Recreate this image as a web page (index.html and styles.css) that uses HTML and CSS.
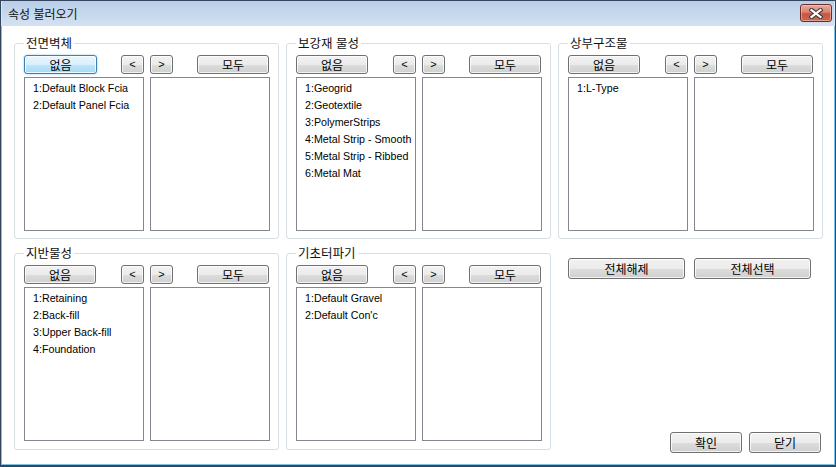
FILE: index.html
```html
<!DOCTYPE html>
<html lang="ko">
<head>
    <meta charset="UTF-8">
    <title>속성 불러오기</title>
    <link rel="stylesheet" href="styles.css">
</head>
<body>
<div class="window">
    <div class="titlebar">
        <span class="title">속성 불러오기</span>
        <button class="close-btn" aria-label="닫기">
            <svg width="14" height="11" viewBox="0 0 14 11">
                <path d="M2.5 2 L11.5 9 M11.5 2 L2.5 9" stroke="#3d3d3d" stroke-width="4.2" stroke-linecap="square" fill="none"/>
                <path d="M2.5 2 L11.5 9 M11.5 2 L2.5 9" stroke="#ffffff" stroke-width="2.2" stroke-linecap="square" fill="none"/>
            </svg>
        </button>
    </div>
    <div class="client">
        <fieldset class="group">
            <legend>전면벽체</legend>
            <div class="picker">
                <div class="bar"><button class="btn btn-side is-default">없음</button><button class="btn btn-arrow">&lt;</button></div>
                <div class="bar bar-right"><button class="btn btn-arrow">&gt;</button><button class="btn btn-side">모두</button></div>
                <ul class="list">
                    <li>1:Default Block Fcia</li>
                    <li>2:Default Panel Fcia</li>
                </ul>
                <ul class="list"></ul>
            </div>
        </fieldset>

        <fieldset class="group">
            <legend>보강재 물성</legend>
            <div class="picker">
                <div class="bar"><button class="btn btn-side">없음</button><button class="btn btn-arrow">&lt;</button></div>
                <div class="bar bar-right"><button class="btn btn-arrow">&gt;</button><button class="btn btn-side">모두</button></div>
                <ul class="list">
                    <li>1:Geogrid</li>
                    <li>2:Geotextile</li>
                    <li>3:PolymerStrips</li>
                    <li>4:Metal Strip - Smooth</li>
                    <li>5:Metal Strip - Ribbed</li>
                    <li>6:Metal Mat</li>
                </ul>
                <ul class="list"></ul>
            </div>
        </fieldset>

        <fieldset class="group">
            <legend>상부구조물</legend>
            <div class="picker">
                <div class="bar"><button class="btn btn-side">없음</button><button class="btn btn-arrow">&lt;</button></div>
                <div class="bar bar-right"><button class="btn btn-arrow">&gt;</button><button class="btn btn-side">모두</button></div>
                <ul class="list">
                    <li>1:L-Type</li>
                </ul>
                <ul class="list"></ul>
            </div>
        </fieldset>

        <fieldset class="group">
            <legend>지반물성</legend>
            <div class="picker">
                <div class="bar"><button class="btn btn-side">없음</button><button class="btn btn-arrow">&lt;</button></div>
                <div class="bar bar-right"><button class="btn btn-arrow">&gt;</button><button class="btn btn-side">모두</button></div>
                <ul class="list">
                    <li>1:Retaining</li>
                    <li>2:Back-fill</li>
                    <li>3:Upper Back-fill</li>
                    <li>4:Foundation</li>
                </ul>
                <ul class="list"></ul>
            </div>
        </fieldset>

        <fieldset class="group">
            <legend>기초터파기</legend>
            <div class="picker">
                <div class="bar"><button class="btn btn-side">없음</button><button class="btn btn-arrow">&lt;</button></div>
                <div class="bar bar-right"><button class="btn btn-arrow">&gt;</button><button class="btn btn-side">모두</button></div>
                <ul class="list">
                    <li>1:Default Gravel</li>
                    <li>2:Default Con'c</li>
                </ul>
                <ul class="list"></ul>
            </div>
        </fieldset>

        <div class="actions">
            <div class="action-row">
                <button class="btn btn-wide">전체해제</button>
                <button class="btn btn-wide">전체선택</button>
            </div>
            <div class="action-row footer">
                <button class="btn btn-mid">확인</button>
                <button class="btn btn-mid">닫기</button>
            </div>
        </div>
    </div>
</div>
</body>
</html>
```

FILE: styles.css
```css
* {
    box-sizing: border-box;
}

body {
    margin: 0;
    width: 836px;
    height: 467px;
    overflow: hidden;
    font-family: "Noto Sans CJK KR", "Liberation Sans", sans-serif;
    font-size: 12px;
    color: #000;
}

.window {
    width: 836px;
    height: 467px;
    display: flex;
    flex-direction: column;
    border: 1px solid #34465e;
    border-bottom-width: 2px;
    background: #fff;
}

.titlebar {
    height: 25px;
    flex: none;
    display: flex;
    align-items: center;
    justify-content: space-between;
    padding: 0 2px 0 6px;
    background: linear-gradient(#b9cee7, #c9daee 60%, #d4e2f2);
    border-left: 1px solid #d9e6f4;
    border-right: 1px solid #d9e6f4;
}

.title {
    font-size: 12px;
    line-height: 16px;
    color: #111;
    margin-top: 1px;
}

.close-btn {
    width: 32px;
    height: 18px;
    margin-top: -1px;
    padding: 0;
    display: flex;
    align-items: center;
    justify-content: center;
    border: 1px solid #6c2c28;
    border-radius: 3px;
    background: linear-gradient(#e9a99b, #d98272 45%, #c85440 55%, #cf6a52);
    box-shadow: inset 0 0 0 1px rgba(255, 220, 210, 0.45);
}

.client {
    flex: 1;
    display: grid;
    grid-template-columns: 265px 265px 265px;
    grid-template-rows: 204px 205px;
    column-gap: 7px;
    row-gap: 6px;
    padding: 9px 0 0 12px;
    border: 1px solid #7cc2e4;
    border-top: none;
}

.group {
    margin: 0;
    min-width: 0;
    padding: 4px 8px 0 9px;
    border: 1px solid #d5dfe5;
    border-radius: 3px;
}

.group legend {
    padding: 0 2px;
    font-size: 12.5px;
    line-height: 16px;
    color: #111;
}

.picker {
    display: grid;
    grid-template-columns: 120px 120px;
    grid-template-rows: 19px 154px;
    column-gap: 6px;
    row-gap: 3px;
}

.bar {
    display: flex;
    justify-content: space-between;
}

.bar-right {
    padding-right: 1px;
}

.btn {
    height: 19px;
    padding: 0;
    font-family: "Noto Sans CJK KR", "Liberation Sans", sans-serif;
    font-size: 12px;
    line-height: 15px;
    color: #000;
    border: 1px solid #707070;
    border-radius: 3px;
    background: linear-gradient(#f2f2f2, #ebebeb 50%, #dddddd 51%, #cfcfcf);
    box-shadow: inset 0 0 0 1px rgba(255, 255, 255, 0.75);
}

.btn-side {
    width: 72px;
}

.btn-arrow {
    width: 23px;
    font-family: "Liberation Sans", sans-serif;
    font-size: 11px;
}

.btn.is-default {
    width: 73px;
    border-color: #3c7fb1;
    background: linear-gradient(#eaf6fd, #d9f0fc 50%, #bee6fd 51%, #a7d9f5);
    box-shadow: inset 0 0 0 1px rgba(255, 255, 255, 0.8), 0 0 2px #6ec2f0;
}

.list {
    margin: 0;
    padding: 2px 0 0 8px;
    list-style: none;
    border: 1px solid #828790;
    overflow: hidden;
}

.list li {
    font-family: "Liberation Sans", sans-serif;
    font-size: 10.7px;
    line-height: 17px;
    white-space: nowrap;
    color: #000;
}

.actions {
    display: flex;
    flex-direction: column;
    padding: 13px 0 0 10px;
}

.action-row {
    display: flex;
    gap: 9px;
}

.btn-wide {
    width: 117px;
    height: 21px;
}

.footer {
    margin-top: auto;
    margin-bottom: -3px;
    margin-right: 2px;
    justify-content: flex-end;
    gap: 7px;
}

.btn-mid {
    width: 72px;
    height: 21px;
}
```
